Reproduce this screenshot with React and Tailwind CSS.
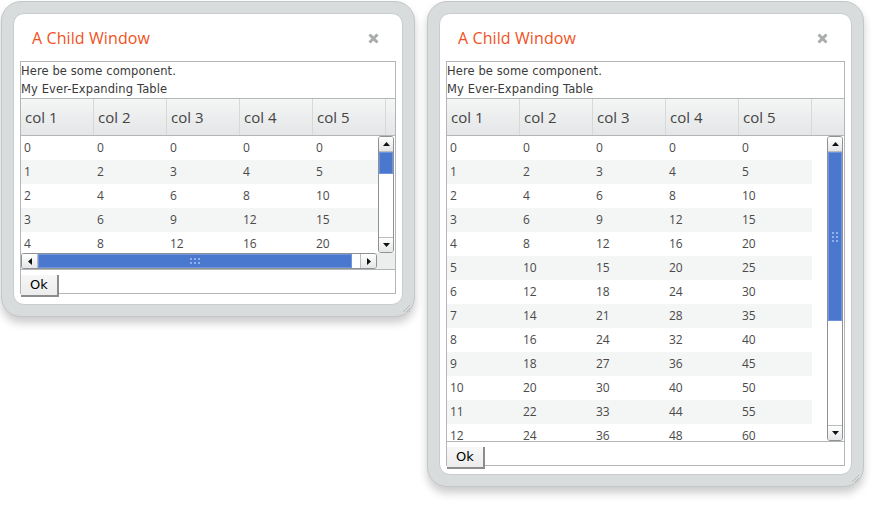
import React from 'react';

const cols = ['col 1', 'col 2', 'col 3', 'col 4', 'col 5'];

const UpArrow = () => (
    <svg width="7" height="4" viewBox="0 0 7 4"><path d="M0 4 L3.5 0 L7 4 Z" fill="#111" /></svg>
);
const DownArrow = () => (
    <svg width="7" height="4" viewBox="0 0 7 4"><path d="M0 0 L3.5 4 L7 0 Z" fill="#111" /></svg>
);
const LeftArrow = () => (
    <svg width="4" height="7" viewBox="0 0 4 7"><path d="M4 0 L0 3.5 L4 7 Z" fill="#111" /></svg>
);
const RightArrow = () => (
    <svg width="4" height="7" viewBox="0 0 4 7"><path d="M0 0 L4 3.5 L0 7 Z" fill="#111" /></svg>
);

const Grip = ({ vertical }) => (
    <svg width={vertical ? 6 : 10} height={vertical ? 10 : 6} viewBox={vertical ? '0 0 6 10' : '0 0 10 6'}>
        {(vertical
            ? [[0, 0], [4, 0], [0, 4], [4, 4], [0, 8], [4, 8]]
            : [[0, 0], [4, 0], [8, 0], [0, 4], [4, 4], [8, 4]]
        ).map(([x, y], i) => (
            <rect key={i} x={x} y={y} width="2" height="2" fill="#8fb0ea" />
        ))}
    </svg>
);

const VScroll = ({ height, thumb }) => (
    <div className="w-[16px] flex flex-col border border-[#8e9293] rounded-[3px] bg-white overflow-hidden" style={{ height }}>
        <div className="h-[15px] shrink-0 flex items-center justify-center bg-gradient-to-b from-white to-[#e4e6e7] border-b border-[#b9bcbd]">
            <UpArrow />
        </div>
        <div className="shrink-0 bg-[#4b78cf] border border-[#6f94db] flex items-center justify-center" style={{ height: thumb }}>
            {thumb > 40 && <Grip vertical />}
        </div>
        <div className="flex-1" />
        <div className="h-[15px] shrink-0 flex items-center justify-center bg-gradient-to-b from-white to-[#e4e6e7] border-t border-[#b9bcbd]">
            <DownArrow />
        </div>
    </div>
);

const HScroll = () => (
    <div className="flex h-[16px] bg-[#eceded]">
        <div className="w-[356px] flex border border-[#8e9293] rounded-[3px] bg-white overflow-hidden">
            <div className="w-[16px] shrink-0 flex items-center justify-center bg-gradient-to-b from-white to-[#e4e6e7] border-r border-[#b9bcbd]">
                <LeftArrow />
            </div>
            <div className="w-[314px] shrink-0 bg-[#4b78cf] border border-[#6f94db] flex items-center justify-center">
                <Grip />
            </div>
            <div className="flex-1" />
            <div className="w-[16px] shrink-0 flex items-center justify-center bg-gradient-to-b from-white to-[#e4e6e7] border-l border-[#b9bcbd]">
                <RightArrow />
            </div>
        </div>
    </div>
);

const Rows = ({ count }) => (
    <div className="flex flex-col">
        {Array.from({ length: count }).map((_, i) => (
            <div key={i} className={`h-[24px] shrink-0 flex items-center w-[365px] ${i % 2 ? 'bg-[#f4f5f5]' : 'bg-white'}`}>
                {[1, 2, 3, 4, 5].map((m) => (
                    <div key={m} className="w-[73px] shrink-0 pl-[3px] text-[12px] text-[#4a4a4a]">{i * m}</div>
                ))}
            </div>
        ))}
    </div>
);

const ChildWindow = ({ outerW, outerH, bodyH, rowCount, hScroll, thumb }) => (
    <div
        className="relative shrink-0 rounded-[20px] bg-[#d8dcdd] border border-[#c3c7c8] p-[11px] shadow-[0_6px_9px_rgba(0,0,0,0.2)]"
        style={{ width: outerW, height: outerH }}
    >
        <div className="h-full flex flex-col rounded-[11px] bg-white border border-[#c9cdce] px-[6px] pb-[10px]">
            <div className="h-[47px] shrink-0 flex items-center justify-between pl-[12px] pr-[17px] pt-[1px]">
                <span className="text-[16px] text-[#f1511d] font-medium tracking-[0.1px]">A Child Window</span>
                <svg width="11" height="11" viewBox="0 0 11 11">
                    <path d="M1.5 1.5 L9.5 9.5 M9.5 1.5 L1.5 9.5" stroke="#a9acad" strokeWidth="3" />
                </svg>
            </div>
            <div className="flex-1 flex flex-col border border-[#b3b6b7] font-['DejaVu_Sans',sans-serif]">
                <div className="h-[36px] shrink-0 flex flex-col text-[11.5px] leading-[18px] text-[#3a3a3a] tracking-[0.1px]">
                    <div>Here be some component.</div>
                    <div>My Ever-Expanding Table</div>
                </div>
                <div className="flex flex-col border-t border-[#b3b6b7] font-['Open_Sans',sans-serif]">
                    <div className="h-[37px] shrink-0 flex border-b border-[#b3b6b7] bg-gradient-to-b from-[#f4f5f5] to-[#e5e6e7]">
                        {cols.map((c) => (
                            <div key={c} className="w-[73px] shrink-0 flex items-center pl-[4px] border-r border-[#d6d8d9] text-[15px] text-[#444]">{c}</div>
                        ))}
                        <div className="flex-1" />
                    </div>
                    <div className="flex overflow-hidden" style={{ height: bodyH }}>
                        <div className="flex-1 overflow-hidden">
                            <Rows count={rowCount} />
                        </div>
                        <div className="pr-[1px] shrink-0">
                            <VScroll height={bodyH} thumb={thumb} />
                        </div>
                    </div>
                    {hScroll && <HScroll />}
                    <div className="h-[24px] shrink-0 border-t border-[#b3b6b7] pt-[1px]">
                        <button className="h-[22px] px-[9px] bg-gradient-to-b from-[#f7f7f7] to-[#ececec] border-r-2 border-b-2 border-[#8c8c8c] font-['DejaVu_Sans',sans-serif] text-[13px] text-black leading-none">
                            Ok
                        </button>
                    </div>
                </div>
            </div>
        </div>
        <svg className="absolute right-[3px] bottom-[3px]" width="10" height="10" viewBox="0 0 10 10">
            <path d="M9 2 L2 9 M9 5 L5 9 M9 8 L8 9" stroke="#b8bcbd" strokeWidth="1" />
        </svg>
    </div>
);

export default function App() {
    return (
        <div className="w-[889px] h-[515px] bg-white flex items-start gap-[12px] pl-[1px] pt-[1px] font-['Open_Sans',sans-serif]">
            <ChildWindow outerW={414} outerH={316} bodyH={117} rowCount={5} hScroll thumb={22} />
            <ChildWindow outerW={437} outerH={486} bodyH={305} rowCount={13} thumb={169} />
        </div>
    );
}
